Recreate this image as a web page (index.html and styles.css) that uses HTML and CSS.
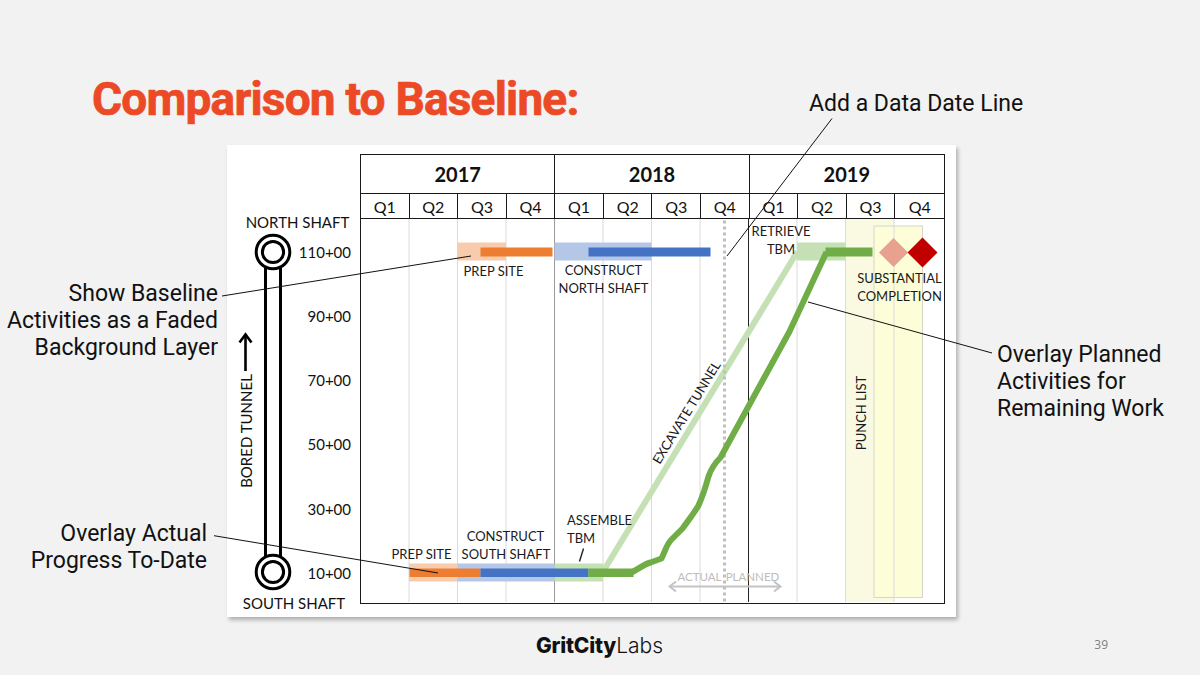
FILE: index.html
```html
<!DOCTYPE html>
<html lang="en">
<head>
<meta charset="utf-8">
<title>Comparison to Baseline</title>
<link rel="stylesheet" href="styles.css">
</head>
<body>
<div class="slide">
  <h1 class="title">Comparison to Baseline:</h1>

  <div class="card">
    <svg class="axis" viewBox="227 146 133 471" width="133" height="471">
      <text class="ax-lbl" x="297.5" y="229" text-anchor="middle">NORTH SHAFT</text>
      <text class="ax-lbl" x="294" y="610" text-anchor="middle">SOUTH SHAFT</text>
      <g class="tube">
        <line x1="265.5" y1="268" x2="265.5" y2="558"/>
        <line x1="280.5" y1="268" x2="280.5" y2="558"/>
        <circle cx="273" cy="253" r="16.8" fill="#fff"/>
        <circle cx="273" cy="253" r="10.6" fill="#fff"/>
        <circle cx="273" cy="573" r="16.8" fill="#fff"/>
        <circle cx="273" cy="573" r="10.6" fill="#fff"/>
      </g>
      <g class="ax-num">
        <text x="351" y="258.5">110+00</text>
        <text x="351" y="322.7">90+00</text>
        <text x="351" y="387">70+00</text>
        <text x="351" y="451.2">50+00</text>
        <text x="351" y="515.5">30+00</text>
        <text x="351" y="579.5">10+00</text>
      </g>
      <text class="ax-lbl" transform="translate(251.5 432) rotate(-90)" text-anchor="middle">BORED TUNNEL</text>
      <line class="arrow-shaft" x1="245.5" y1="372" x2="245.5" y2="337"/>
      <polyline class="arrow-head" points="239.5,343.5 245.5,335.5 251.5,343.5"/>
    </svg>

    <div class="chart">
      <div class="years">
        <div class="year">2017</div>
        <div class="year">2018</div>
        <div class="year">2019</div>
      </div>
      <div class="quarters">
        <div class="q">Q1</div><div class="q">Q2</div><div class="q">Q3</div><div class="q">Q4</div>
        <div class="q">Q1</div><div class="q">Q2</div><div class="q">Q3</div><div class="q">Q4</div>
        <div class="q">Q1</div><div class="q">Q2</div><div class="q">Q3</div><div class="q">Q4</div>
      </div>
      <svg class="plot" viewBox="361.5 220.5 582 383" width="582" height="383">
        <!-- punch list zone -->
        <rect x="846" y="220" width="48.5" height="384" fill="#fafae3"/>
        <rect x="874.5" y="227.5" width="48.5" height="371.5" fill="#fdfdd7" stroke="#d6d6cc" stroke-width="1"/>
        <!-- grid -->
        <g class="grid">
          <line x1="409.5" y1="220" x2="409.5" y2="604"/>
          <line x1="458" y1="220" x2="458" y2="604"/>
          <line x1="506.5" y1="220" x2="506.5" y2="604"/>
          <line x1="603.5" y1="220" x2="603.5" y2="604"/>
          <line x1="652" y1="220" x2="652" y2="604"/>
          <line x1="700.5" y1="220" x2="700.5" y2="604"/>
          <line x1="797.5" y1="220" x2="797.5" y2="604"/>
          <line x1="846" y1="220" x2="846" y2="604"/>
          <line x1="894.5" y1="220" x2="894.5" y2="604"/>
        </g>
        <line x1="555" y1="220" x2="555" y2="604" stroke="#9a9a9a" stroke-width="1"/>
        <line x1="749" y1="220" x2="749" y2="604" stroke="#222" stroke-width="1"/>

        <!-- baseline (faded) -->
        <rect x="458" y="244" width="48.5" height="18" fill="#f8cbad"/>
        <rect x="555" y="244" width="97" height="18" fill="#b4c7e7"/>
        <rect x="797.5" y="244" width="48.5" height="18" fill="#c5e0b4"/>
        <rect x="409.5" y="565" width="48.5" height="18" fill="#f8cbad"/>
        <rect x="458" y="565" width="97" height="18" fill="#b4c7e7"/>
        <rect x="555" y="565" width="48.5" height="18" fill="#c5e0b4"/>
        <line x1="603" y1="574" x2="798" y2="253" stroke="#c5e0b4" stroke-width="6"/>

        <!-- data date -->
        <line x1="725" y1="222" x2="725" y2="604" stroke="#bfbfbf" stroke-width="3" stroke-dasharray="3 3"/>

        <!-- actual -->
        <rect x="481" y="249" width="72" height="9" fill="#ed7d31"/>
        <rect x="589" y="249" width="122" height="9" fill="#4472c4"/>
        <rect x="410" y="570" width="71" height="8.5" fill="#ed7d31"/>
        <rect x="481" y="570" width="108" height="8.5" fill="#4472c4"/>
        <rect x="589" y="570" width="45" height="8.5" fill="#70ad47"/>
        <rect x="826" y="249" width="47" height="9" fill="#70ad47"/>
        <path d="M632,574 C640,570 644,566 651,564 L662,560 C666,552 667,546 672,541 L683,530 C688,523 693,517 699,507 C703,498 706,489 709,478 C712,469 716,464 721,459 L750,406 L790,333 L827,253.5" fill="none" stroke="#70ad47" stroke-width="6" stroke-linejoin="round"/>

        <!-- completion -->
        <polygon points="894,239.5 908.5,254 894,268.5 879.5,254" fill="#e9a18f"/>
        <polygon points="923,239 938,254 923,269 908,254" fill="#c00000"/>

        <!-- labels -->
        <g class="lbl">
          <text x="494" y="277">PREP SITE</text>
          <text x="604" y="276.5">CONSTRUCT</text>
          <text x="604" y="294">NORTH SHAFT</text>
          <text x="781.5" y="237">RETRIEVE</text>
          <text x="781.5" y="255">TBM</text>
          <text x="900" y="284">SUBSTANTIAL</text>
          <text x="900" y="302">COMPLETION</text>
          <text x="422" y="560.5">PREP SITE</text>
          <text x="506" y="542.5">CONSTRUCT</text>
          <text x="506.5" y="560.5">SOUTH SHAFT</text>
          <text class="start" x="567.5" y="526">ASSEMBLE</text>
          <text class="start" x="567.5" y="544">TBM</text>
          <text transform="translate(687 414) rotate(-58.5)" y="4.6">EXCAVATE TUNNEL</text>
          <text transform="translate(866.5 414.5) rotate(-90)">PUNCH LIST</text>
        </g>
        <line x1="580" y1="563" x2="584" y2="550" stroke="#222" stroke-width="1.4"/>

        <g class="dd">
          <text x="700" y="582">ACTUAL</text>
          <text x="753" y="582">PLANNED</text>
        </g>
        <g class="dd-arrow">
          <line x1="670" y1="588" x2="781" y2="588"/>
          <polyline points="676.5,583 670,588 676.5,593"/>
          <polyline points="774.5,583 781,588 774.5,593"/>
        </g>
      </svg>
    </div>
  </div>

  <svg class="leaders" viewBox="0 0 1200 675" width="1200" height="675">
    <line x1="832" y1="118.5" x2="727" y2="256"/>
    <line x1="222" y1="296" x2="471" y2="256"/>
    <line x1="214" y1="535.7" x2="438" y2="573"/>
    <line x1="808" y1="302" x2="992" y2="353"/>
  </svg>

  <div class="note note-datadate">Add a Data Date Line</div>
  <div class="note note-baseline">Show Baseline<br>Activities as a Faded<br>Background Layer</div>
  <div class="note note-actual">Overlay Actual<br>Progress To-Date</div>
  <div class="note note-planned">Overlay Planned<br>Activities for<br>Remaining Work</div>

  <footer class="footer">
    <div class="logo"><span class="logo-bold">GritCity</span><span class="logo-light">Labs</span></div>
    <div class="page-num">39</div>
  </footer>
</div>
</body>
</html>
```

FILE: styles.css
```css
* { box-sizing: border-box; }

html, body {
  margin: 0;
  padding: 0;
  background: #f2f2f2;
}

.slide {
  position: relative;
  width: 1200px;
  height: 675px;
  overflow: hidden;
  background: #f2f2f2;
  padding-top: 74px;
  font-family: Roboto, "Liberation Sans", sans-serif;
}

.title {
  margin: 0 0 0 92px;
  font-family: Roboto, "Liberation Sans", sans-serif;
  font-weight: 700;
  font-size: 46px;
  line-height: 50px;
  height: 49px;
  color: #ec4a26;
  letter-spacing: -0.8px;
  -webkit-text-stroke: 0.7px #ec4a26;
}

.card {
  display: flex;
  align-items: flex-start;
  width: 729px;
  height: 472px;
  margin: 22px 0 0 227px;
  background: #fff;
  box-shadow: 2px 3px 4px rgba(0, 0, 0, 0.28);
}

.axis {
  display: block;
  flex: none;
}

.ax-lbl {
  font-family: Lato, "Open Sans", sans-serif;
  font-size: 15px;
  fill: #111;
}

.ax-num text {
  font-family: Lato, "Open Sans", sans-serif;
  font-size: 15px;
  fill: #111;
  text-anchor: end;
}

.tube line,
.tube circle {
  stroke: #000;
  stroke-width: 3;
}

.arrow-shaft,
.arrow-head {
  stroke: #000;
  stroke-width: 2.6;
  fill: none;
}

.chart {
  flex: none;
  width: 585px;
  height: 450px;
  margin-top: 9px;
  border: 1.5px solid #1a1a1a;
  font-family: Lato, "Open Sans", sans-serif;
  color: #111;
}

.years {
  display: grid;
  grid-template-columns: repeat(3, 1fr);
  height: 39px;
  border-bottom: 1px solid #1a1a1a;
}

.year {
  display: flex;
  align-items: center;
  justify-content: center;
  font-weight: 700;
  font-size: 20px;
  border-right: 1px solid #1a1a1a;
}

.year:last-child { border-right: none; }

.quarters {
  display: grid;
  grid-template-columns: repeat(12, 1fr);
  height: 25px;
  border-bottom: 1px solid #1a1a1a;
}

.q {
  display: flex;
  align-items: center;
  justify-content: center;
  font-size: 16px;
  border-right: 1px solid #1a1a1a;
}

.q:last-child { border-right: none; }

.plot {
  display: block;
}

.grid line {
  stroke: #dadada;
  stroke-width: 1;
}

.lbl text {
  font-family: Lato, "Open Sans", sans-serif;
  font-size: 13px;
  fill: #1a1a1a;
  text-anchor: middle;
}

.lbl text.start {
  text-anchor: start;
}

.dd text {
  font-family: Lato, "Open Sans", sans-serif;
  font-size: 11.5px;
  fill: #bdbdbd;
  text-anchor: middle;
}

.dd-arrow line,
.dd-arrow polyline {
  stroke: #c4c4c4;
  stroke-width: 2;
  fill: none;
}

.leaders {
  position: absolute;
  left: 0;
  top: 0;
  pointer-events: none;
}

.leaders line {
  stroke: #111;
  stroke-width: 1;
}

.note {
  position: absolute;
  font-family: Roboto, "Liberation Sans", sans-serif;
  font-size: 23px;
  line-height: 27px;
  color: #111;
  white-space: nowrap;
}

.note-datadate { left: 809px; top: 90px; }
.note-baseline { right: 982px; top: 280px; text-align: right; }
.note-actual { right: 993px; top: 520px; text-align: right; }
.note-planned { left: 997px; top: 341px; }

.footer {
  display: flex;
  align-items: center;
  margin-top: 17px;
  height: 24px;
}

.logo {
  margin-left: 536px;
  font-family: Inter, Roboto, sans-serif;
  font-size: 21px;
  line-height: 24px;
  color: #111;
}

.logo-bold {
  font-weight: 800;
  letter-spacing: -0.2px;
}

.logo-light {
  font-weight: 300;
}

.page-num {
  margin-left: auto;
  margin-right: 92px;
  font-family: "Open Sans", sans-serif;
  font-size: 12px;
  color: #7f7f7f;
  padding-bottom: 4px;
}
```
